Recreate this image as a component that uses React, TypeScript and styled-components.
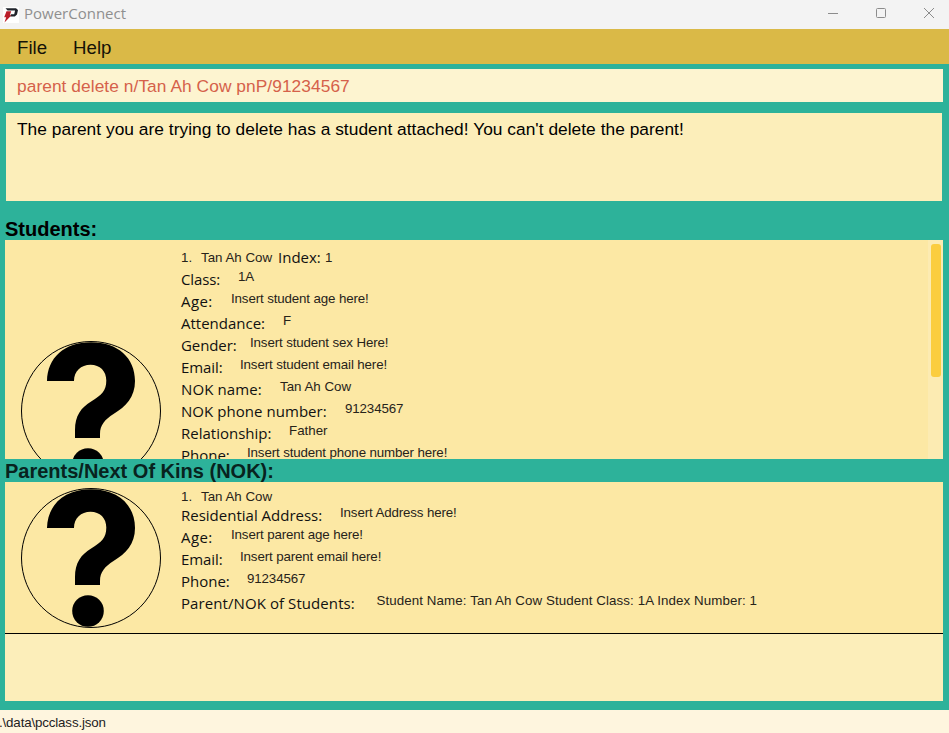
import React from "react";
import styled, { createGlobalStyle } from "styled-components";

const Global = createGlobalStyle`
  * { box-sizing: border-box; }
  html, body { margin: 0; padding: 0; overflow: hidden; }
  body { font-family: "Liberation Sans", Arial, sans-serif; color: #000; }
`;

const Window = styled.div`
  display: flex;
  flex-direction: column;
  width: 949px;
  height: 733px;
  background: #2db29a;
  white-space: pre;
  overflow: hidden;
`;

const TitleBar = styled.header`
  display: flex;
  align-items: center;
  height: 29px;
  flex: none;
  padding-left: 3px;
  background: #f3f3f3;
`;

const Title = styled.span`
  flex: 1;
  margin-left: 5px;
  font: 15px/27px "Open Sans", sans-serif;
  height: 29px;
  color: #8f8f8f;
`;

const WindowButtons = styled.div`
  display: flex;
  gap: 36px;
  padding: 0 14px 3px 0;
  svg { display: block; }
`;

const MenuBar = styled.nav`
  display: flex;
  gap: 26px;
  height: 35px;
  flex: none;
  padding-left: 17px;
  background: #dab947;
  font-size: 18.67px;
  line-height: 37px;
  color: #151207;
`;

const CommandBox = styled.div`
  flex: none;
  height: 33px;
  margin: 5px 6px 0 5px;
  padding-left: 12px;
  background: #fdf4d0;
  color: #d5614a;
  font-size: 17.33px;
  letter-spacing: 0.06px;
  line-height: 34px;
`;

const ResultBox = styled.div`
  flex: none;
  height: 88px;
  margin: 11px 7px 0 6px;
  padding: 6px 11px;
  background: #fceeba;
  font-size: 17.33px;
  letter-spacing: 0.03px;
  line-height: 20px;
`;

const Heading = styled.h2<{ $height: number; $line: number; $color: string }>`
  flex: none;
  margin: 0 0 0 5px;
  height: ${(p) => p.$height}px;
  font-size: 20px;
  line-height: ${(p) => p.$line}px;
  color: ${(p) => p.$color};
`;

const ListPanel = styled.section`
  display: flex;
  flex: none;
  height: 219px;
  margin: 0 6px 0 5px;
  background: #fceeba;
  overflow: hidden;
`;

const Card = styled.article<{ $height: number; $line?: boolean }>`
  display: flex;
  flex: 1;
  gap: 20px;
  align-items: center;
  height: ${(p) => p.$height}px;
  padding-left: 16px;
  background: #fce8a4;
  border-bottom: ${(p) => (p.$line ? "1px solid #000" : "none")};
`;

const Avatar = styled.svg`
  flex: none;
  display: block;
`;

const Details = styled.div`
  align-self: flex-start;
  padding-top: 6px;
`;

const NameRow = styled.div<{ $height: number; $line: number }>`
  display: flex;
  height: ${(p) => p.$height}px;
  font-size: 13.33px;
  line-height: ${(p) => p.$line}px;
  color: #27231a;
`;

const Ordinal = styled.span`
  width: 20px;
`;

const Name = styled.span`
  width: 77px;
`;

const IndexLabel = styled.span`
  width: 47px;
  font: 15px/22px "Open Sans", sans-serif;
  color: #111;
`;

const Field = styled.div`
  display: flex;
  height: 22px;
`;

const Label = styled.span<{ $width: number; $spacing: number }>`
  flex: none;
  width: ${(p) => p.$width}px;
  font: 15px/22px "Open Sans", sans-serif;
  letter-spacing: ${(p) => p.$spacing}px;
  color: #111;
`;

const Value = styled.span<{ $spacing: number }>`
  font-size: 13.33px;
  line-height: 18px;
  letter-spacing: ${(p) => p.$spacing}px;
  color: #27231a;
`;

const ScrollTrack = styled.div`
  width: 15px;
  padding: 4px 2px 0 3px;
  background: #fcebb2;
`;

const ScrollThumb = styled.div`
  height: 133px;
  border-radius: 3px;
  background: #fbcd3f;
`;

const StatusBar = styled.footer`
  flex: none;
  height: 23px;
  margin-top: 9px;
  text-indent: -1px;
  background: #fef5de;
  font-size: 13.33px;
  letter-spacing: -0.15px;
  line-height: 25px;
  color: #222;
`;

interface Row {
  label: string;
  width: number;
  value: string;
  labelSpacing?: number;
  valueSpacing?: number;
}

const studentRows: Row[] = [
  { label: "Class:", width: 57, value: "1A", labelSpacing: -0.1 },
  { label: "Age:", width: 50, value: "Insert student age here!", labelSpacing: 0.4 },
  { label: "Attendance:", width: 102, value: "F" },
  { label: "Gender:", width: 69, value: "Insert student sex Here!", labelSpacing: -0.1 },
  { label: "Email:", width: 59, value: "Insert student email here!", labelSpacing: -0.1 },
  { label: "NOK name:", width: 99, value: "Tan Ah Cow", labelSpacing: 0.1, valueSpacing: 0 },
  { label: "NOK phone number:", width: 164, value: "91234567", labelSpacing: 0.05 },
  { label: "Relationship:", width: 108, value: "Father", valueSpacing: 0 },
  { label: "Phone:", width: 66, value: "Insert student phone number here!" },
];

const parentRows: Row[] = [
  { label: "Residential Address:", width: 159, value: "Insert Address here!" },
  { label: "Age:", width: 50, value: "Insert parent age here!", labelSpacing: 0.4 },
  { label: "Email:", width: 59, value: "Insert parent email here!", labelSpacing: -0.1 },
  { label: "Phone:", width: 66, value: "91234567" },
  {
    label: "Parent/NOK of Students:",
    width: 195.500,
    value: "Student Name: Tan Ah Cow Student Class: 1A Index Number: 1",
    labelSpacing: 0.08,
    valueSpacing: 0.09,
  },
];

const Logo = () => (
  <svg width="16" height="16" viewBox="0 0 16 16">
    <rect width="16" height="16" fill="#fff" />
    <path d="M2.500 1.200H13L15 3L14 7.600L11.800 9.500H7.200L7.900 7.200H11.200L12.100 3.600H4.600Z" fill="#20242b" />
    <path d="M3.500 4.200H8.200L6.900 8.200H8.500L1.500 15.500L3.200 10.300H1.200Z" fill="#b91c28" />
  </svg>
);

const QuestionAvatar = () => (
  <Avatar width="140" height="140" viewBox="0 0 140 140">
    <circle cx="70" cy="70" r="69.5" fill="none" stroke="#000" strokeWidth="1" />
    <path d="M26 40C26.500 17 43 1.300 70 1.300C97 1.300 114 17 114 40C114 56 105 65.500 92.500 73C84 78.500 79 84 79 93V97H54V89C54 75 60 66.500 70.500 60.300C80.500 54 85.300 50 85.300 39.500C85.300 30 79 23.700 69.500 23.700C60 23.700 53 30 53 40Z" />
    <circle cx="67" cy="123" r="15.800" />
  </Avatar>
);

const Fields = ({ rows }: { rows: Row[] }) => (
  <>
    {rows.map((row) => (
      <Field key={row.label}>
        <Label $width={row.width} $spacing={row.labelSpacing ?? 0}>{row.label}</Label>
        <Value $spacing={row.valueSpacing ?? -0.13}>{row.value}</Value>
      </Field>
    ))}
  </>
);

export default function App() {
  return (
    <>
      <Global />
      <Window>
        <TitleBar>
          <Logo />
          <Title>PowerConnect</Title>
          <WindowButtons>
            <svg width="12" height="12" fill="none" stroke="#8c8c8c">
              <path d="M1 6.500H11" />
            </svg>
            <svg width="12" height="12" fill="none" stroke="#8c8c8c">
              <rect x="1.500" y="1.500" width="9" height="9" rx="1" />
            </svg>
            <svg width="12" height="12" fill="none" stroke="#8c8c8c">
              <path d="M1 1L11 11M11 1L1 11" />
            </svg>
          </WindowButtons>
        </TitleBar>
        <MenuBar>
          <span>File</span>
          <span>Help</span>
        </MenuBar>
        <CommandBox>parent delete n/Tan Ah Cow pnP/91234567</CommandBox>
        <ResultBox>
          The parent you are trying to delete has a student attached! You can't delete the parent!
        </ResultBox>
        <Heading $height={39} $line={56} $color="#000">Students:</Heading>
        <ListPanel>
          <Card $height={342}>
            <QuestionAvatar />
            <Details>
              <NameRow $height={22} $line={24}>
                <Ordinal>1.</Ordinal>
                <Name>Tan Ah Cow</Name>
                <IndexLabel>Index:</IndexLabel>
                <span>1</span>
              </NameRow>
              <Fields rows={studentRows} />
            </Details>
          </Card>
          <ScrollTrack>
            <ScrollThumb />
          </ScrollTrack>
        </ListPanel>
        <Heading $height={23} $line={24} $color="#08231e">Parents/Next Of Kins (NOK):</Heading>
        <ListPanel>
          <Card $height={152} $line>
            <QuestionAvatar />
            <Details>
              <NameRow $height={16} $line={18}>
                <Ordinal>1.</Ordinal>
                <Name>Tan Ah Cow</Name>
              </NameRow>
              <Fields rows={parentRows} />
            </Details>
          </Card>
        </ListPanel>
        <StatusBar>.\data\pcclass.json</StatusBar>
      </Window>
    </>
  );
}
